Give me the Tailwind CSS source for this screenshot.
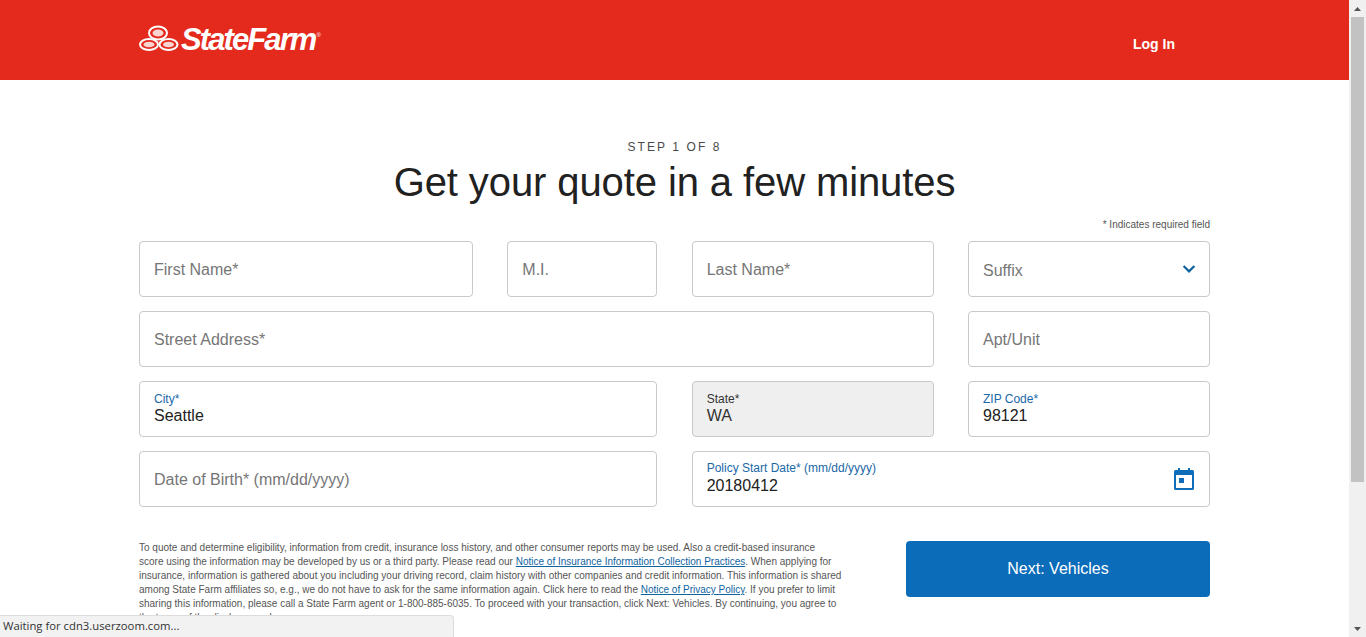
<!DOCTYPE html>
<html lang="en">
<head>
  <meta charset="UTF-8" />
  <title>Get your quote</title>
  <script src="https://cdn.jsdelivr.net/npm/@tailwindcss/browser@4"></script>
</head>
<body class="h-[637px] overflow-hidden bg-white font-['Liberation_Sans',Arial,sans-serif] text-[#212121]">
<div class="relative flex h-[637px] overflow-hidden">

  <div class="w-[1349px] shrink-0">
    <!-- Header -->
    <header class="flex h-[80px] items-start justify-between bg-[#e42a1d] pl-[139px] pr-[174px] text-white">
      <div class="flex items-start pt-[22px]">
        <svg width="41" height="30" viewBox="0 0 41 30" class="mt-[3px] shrink-0">
          <g fill="#e42a1d" stroke="#fff" stroke-width="2">
            <ellipse cx="19" cy="8" rx="9" ry="6.500"/>
            <ellipse cx="10" cy="19.500" rx="9" ry="5.600"/>
            <ellipse cx="29.500" cy="19.500" rx="9" ry="5.600"/>
          </g>
          <g fill="#fff" fill-opacity="0.8">
            <ellipse cx="19" cy="8" rx="5.500" ry="3.500"/>
            <ellipse cx="10" cy="19.500" rx="5.500" ry="2.800"/>
            <ellipse cx="29.500" cy="19.500" rx="5.500" ry="2.800"/>
          </g>
        </svg>
        <span class="ml-[1px] text-[31px] leading-[36px] font-bold italic tracking-[-1.900px]">StateFarm</span>
        <span class="mt-[9px] ml-[1px] text-[6px] leading-[8px]">®</span>
      </div>
      <a href="#" class="mt-[35px] text-sm leading-[18px] font-bold">Log In</a>
    </header>

    <main class="px-[139px]">
      <div class="pt-[60px] text-center">
        <p class="text-xs leading-[14px] tracking-[2.100px] text-[#4a4a4a]">STEP 1 OF 8</p>
        <h1 class="text-[40px] leading-[56px] -tracking-[0.100px]">Get your quote in a few minutes</h1>
      </div>
      <p class="mt-[9px] text-right text-[10px] leading-[12px] text-[#555]">* Indicates required field</p>

      <!-- Form -->
      <form class="mt-[10px] grid w-[1071px] grid-cols-[334px_150px_242px_242px] gap-x-[34.330px] gap-y-[14px]">
        <div class="flex h-[56px] items-center rounded border border-[#c9c9c9] px-[14px] pt-[1px] text-base text-[#767676]">First Name*</div>
        <div class="flex h-[56px] items-center rounded border border-[#c9c9c9] px-[14px] pt-[1px] text-base text-[#767676]">M.I.</div>
        <div class="flex h-[56px] items-center rounded border border-[#c9c9c9] px-[14px] pt-[1px] text-base text-[#767676]">Last Name*</div>
        <div class="flex h-[56px] items-center justify-between rounded border border-[#c9c9c9] pr-[13px] pl-[14px] text-base text-[#767676]">
          <span class="pt-[3px]">Suffix</span>
          <svg width="14" height="10" viewBox="0 0 14 10" fill="none" stroke="#0f64a0" stroke-width="2.200"><path d="M1.600 2 7 7.400 12.400 2"/></svg>
        </div>

        <div class="col-span-3 flex h-[56px] items-center rounded border border-[#c9c9c9] px-[14px] pt-[1px] text-base text-[#767676]">Street Address*</div>
        <div class="flex h-[56px] items-center rounded border border-[#c9c9c9] px-[14px] pt-[1px] text-base text-[#767676]">Apt/Unit</div>

        <div class="col-span-2 h-[56px] rounded border border-[#c9c9c9] px-[14px] pt-[10px]">
          <div class="text-xs leading-[14px] text-[#1b68a8]">City*</div>
          <div class="text-base leading-[19px]">Seattle</div>
        </div>
        <div class="h-[56px] rounded border border-[#c9c9c9] bg-[#efefef] px-[14px] pt-[10px]">
          <div class="text-xs leading-[14px] text-[#333]">State*</div>
          <div class="text-base leading-[19px] text-[#333]">WA</div>
        </div>
        <div class="h-[56px] rounded border border-[#c9c9c9] px-[14px] pt-[10px]">
          <div class="text-xs leading-[14px] text-[#1b68a8]">ZIP Code*</div>
          <div class="text-base leading-[19px]">98121</div>
        </div>

        <div class="col-span-2 flex h-[56px] items-center rounded border border-[#c9c9c9] px-[14px] pt-[1px] text-base text-[#767676]">Date of Birth* (mm/dd/yyyy)</div>
        <div class="col-span-2 flex h-[56px] items-center justify-between rounded border border-[#c9c9c9] pr-[14px] pl-[14px]">
          <div class="self-start pt-[9px]">
            <div class="text-xs leading-[14px] text-[#1b68a8]">Policy Start Date* (mm/dd/yyyy)</div>
            <div class="mt-[1px] text-base leading-[19px]">20180412</div>
          </div>
          <svg width="22" height="24" viewBox="0 0 22 24" fill="#0f6cb8" class="mt-[-1px]">
            <path d="M5 1h2v2h8V1h2v2h2.500A1.500 1.500 0 0 1 21 4.500v17a1.500 1.500 0 0 1-1.500 1.500h-17A1.500 1.500 0 0 1 1 21.500v-17A1.500 1.500 0 0 1 2.500 3H5V1Zm-2 7v13h16V8H3Z"/>
            <rect x="6" y="11" width="5" height="5"/>
          </svg>
        </div>
      </form>

      <!-- Disclosure + button -->
      <div class="mt-[34px] flex items-start justify-between">
        <p class="w-[720px] text-[10px] leading-[14px] text-[#555]">
          To quote and determine eligibility, information from credit, insurance loss history, and other consumer reports may be used. Also a credit-based insurance<br>
          score using the information may be developed by us or a third party. Please read our <a href="#" class="text-[#0f64a0] underline">Notice of Insurance Information Collection Practices</a>. When applying for<br>
          insurance, information is gathered about you including your driving record, claim history with other companies and credit information. This information is shared<br>
          among State Farm affiliates so, e.g., we do not have to ask for the same information again. Click here to read the <a href="#" class="text-[#0f64a0] underline">Notice of Privacy Policy</a>. If you prefer to limit<br>
          sharing this information, please call a State Farm agent or 1-800-885-6035. To proceed with your transaction, click Next: Vehicles. By continuing, you agree to<br>
          the terms of the disclosures above.
        </p>
        <button type="button" class="h-[56px] w-[304px] rounded bg-[#0b6cb9] text-base text-white">Next: Vehicles</button>
      </div>
    </main>
  </div>

  <!-- Browser scrollbar -->
  <div class="flex w-[17px] shrink-0 flex-col bg-[#f0f0f0]">
    <div class="flex h-[17px] items-center justify-center">
      <svg width="9" height="6" viewBox="0 0 9 6" fill="#555"><path d="M1 5h7L4.500 1z"/></svg>
    </div>
    <div class="h-[465px] w-[13px] self-center bg-[#c2c2c2]"></div>
    <div class="mt-auto flex h-[17px] items-center justify-center">
      <svg width="9" height="6" viewBox="0 0 9 6" fill="#555"><path d="M1 1h7L4.500 5z"/></svg>
    </div>
  </div>

  <!-- Browser status bubble -->
  <div class="absolute bottom-0 left-0 flex h-[22px] w-[454px] items-center rounded-tr-[4px] border-t border-r border-[#dcdcdc] bg-[#f2f2f2] pl-[3px] font-['Open_Sans',sans-serif] text-[11.300px] text-[#333]">Waiting for cdn3.userzoom.com...</div>
</div>
</body>
</html>
